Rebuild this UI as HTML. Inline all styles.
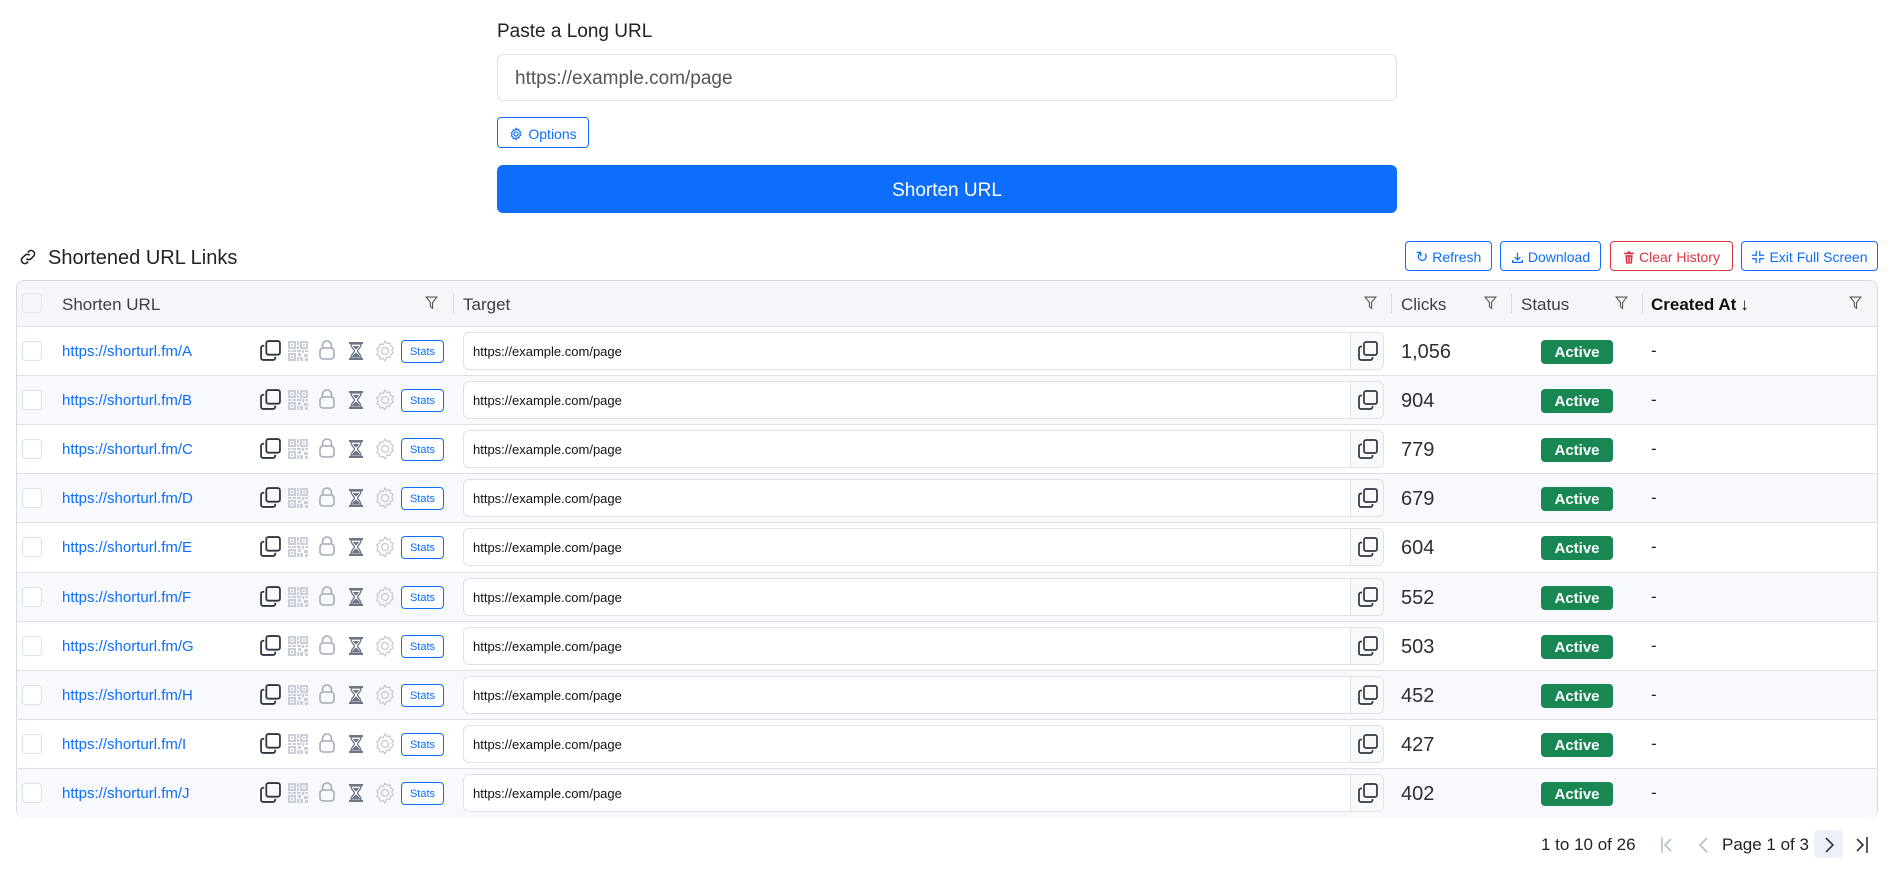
<!DOCTYPE html>
<html><head><meta charset="utf-8">
<style>
*{box-sizing:border-box;margin:0;padding:0}
body{width:1894px;height:875px;background:#fff;font-family:"Liberation Sans",sans-serif;color:#212529;position:relative;overflow:hidden}
.a{position:absolute}
.btn{position:absolute;top:241px;height:30px;border:1px solid #0d6efd;border-radius:4px;color:#0d6efd;font-size:14px;display:flex;align-items:center;justify-content:center;gap:4px;background:#fff;padding-top:2px}
.hdr{position:absolute;top:282px;height:46px;font-size:17px;color:#3a3f47;display:flex;align-items:center}
.sep{position:absolute;top:293px;width:1px;height:20px;background:#d5d9e0}
.flt{position:absolute;top:296px}
.row{position:absolute;left:17px;width:1860px;height:49px;border-top:1px solid #dde2ea}
.row.alt{background:#f8f9fd}
.cb{position:absolute;left:5px;top:14px;width:20px;height:20px;border:1px solid #dee2e6;border-radius:4px;background:#fff}
.lnk{position:absolute;left:45px;top:16px;font-size:15px;color:#0d6efd}
.ic{position:absolute;top:13px}
.stats{position:absolute;left:384px;top:13px;width:43px;height:23px;border:1px solid #0d6efd;border-radius:4px;font-size:11px;color:#0d6efd;display:flex;align-items:center;justify-content:center;background:#fff}
.tin{position:absolute;left:446px;top:5px;width:921px;height:38px;border:1px solid #dee2e6;border-radius:6px;background:#fff;font-size:13px;color:#111;padding-left:9px;line-height:37px}
.tcp{position:absolute;right:0;top:0;width:33px;height:36px;border-left:1px solid #dee2e6;background:#f8f9fa;border-radius:0 6px 6px 0}
.clk{position:absolute;left:1384px;top:14px;font-size:20px;color:#2b2f36}
.act{position:absolute;left:1524px;top:13px;width:72px;height:24px;background:#198754;border-radius:4px;color:#fff;font-weight:bold;font-size:15px;display:flex;align-items:center;justify-content:center;padding-top:1px}
.dash{position:absolute;left:1634px;top:14px;font-size:17px}
</style></head><body>
<div class="a" style="left:497px;top:21px;font-size:19px;color:#222">Paste a Long URL</div>
<div class="a" style="left:497px;top:54px;width:900px;height:47px;border:1px solid #dee2e6;border-radius:6px;font-size:19px;color:#555;padding-left:17px;line-height:48px">https://example.com/page</div>
<div class="a" style="left:497px;top:117px;width:92px;height:31px;border:1px solid #0d6efd;border-radius:4px;color:#0d6efd;font-size:14px;display:flex;align-items:center;justify-content:center;gap:5px;padding-top:2px">
<svg width="14" height="14" viewBox="0 0 16 16" fill="none" stroke="#0d6efd" stroke-width="1.3"><circle cx="8" cy="8" r="2.3"/><path d="M8 1.5l1.2 1.6 2-.4.4 2 1.7 1.1-.9 1.8.9 1.8-1.7 1.1-.4 2-2-.4L8 14.5l-1.2-1.6-2 .4-.4-2-1.7-1.1.9-1.8-.9-1.8 1.7-1.1.4-2 2 .4z"/></svg>Options</div>
<div class="a" style="left:497px;top:165px;width:900px;height:48px;background:#0d6efd;border-radius:6px;color:#fff;font-size:19px;display:flex;align-items:center;justify-content:center;padding-top:3px">Shorten URL</div>

<svg class="a" style="left:19px;top:248px" width="18" height="18" viewBox="0 0 16 16" fill="none" stroke="#222" stroke-width="1.4"><path d="M6.5 9.5a3 3 0 0 0 4.2 0l2.5-2.5a3 3 0 0 0-4.2-4.2L7.8 3.9"/><path d="M9.5 6.5a3 3 0 0 0-4.2 0L2.8 9a3 3 0 0 0 4.2 4.2l1.1-1.1"/></svg>
<div class="a" style="left:48px;top:247px;font-size:20px;color:#222">Shortened URL Links</div>

<div class="btn" style="left:1405px;width:87px"><span style="font-size:15px">↻</span>Refresh</div>
<div class="btn" style="left:1500px;width:101px"><svg width="13" height="13" viewBox="0 0 16 16" fill="none" stroke="#0d6efd" stroke-width="1.5"><path d="M8 2v9M4.5 7.5 8 11l3.5-3.5M2 11v3h12v-3"/></svg>Download</div>
<div class="btn" style="left:1610px;width:123px;border-color:#dc3545;color:#dc3545"><svg width="12" height="13" viewBox="0 0 14 16" fill="#dc3545"><rect x="1" y="2" width="12" height="2"/><rect x="5" y="0.5" width="4" height="2"/><path d="M2.5 5h9l-.8 10.5h-7.4zM5 7v7h1V7zm3 0v7h1V7z"/></svg>Clear History</div>
<div class="btn" style="left:1741px;width:137px"><svg width="14" height="14" viewBox="0 0 16 16" fill="none" stroke="#0d6efd" stroke-width="1.4"><path d="M6 1v5H1M10 1v5h5M6 15v-5H1M10 15v-5h5"/></svg>Exit Full Screen</div>

<div class="a" style="left:16px;top:280px;width:1862px;height:538px;border:1px solid #d5dbe4;border-radius:8px;background:#fff;overflow:hidden">
<div class="a" style="left:0;top:0;width:1862px;height:46px;background:#f5f6f9"></div>
</div>
<div class="a" style="left:22px;top:293px;width:20px;height:20px;border:1px solid #e3e6ea;border-radius:4px;background:#f5f6f9"></div>
<div class="hdr" style="left:62px">Shorten URL</div>
<div class="hdr" style="left:463px">Target</div>
<div class="hdr" style="left:1401px">Clicks</div>
<div class="hdr" style="left:1521px">Status</div>
<div class="hdr" style="left:1651px;color:#111;font-weight:bold">Created At <span style="font-weight:normal;margin-left:4px">↓</span></div>
<div class="sep" style="left:453px"></div><div class="sep" style="left:1391px"></div><div class="sep" style="left:1511px"></div><div class="sep" style="left:1642px"></div>
<svg class="flt" style="left:425px" width="13" height="14" viewBox="0 0 12 13" fill="none" stroke="#555" stroke-width="1"><path d="M1 1h10L7 6v5.5L5 10V6z"/></svg>
<svg class="flt" style="left:1364px" width="13" height="14" viewBox="0 0 12 13" fill="none" stroke="#555" stroke-width="1"><path d="M1 1h10L7 6v5.5L5 10V6z"/></svg>
<svg class="flt" style="left:1484px" width="13" height="14" viewBox="0 0 12 13" fill="none" stroke="#555" stroke-width="1"><path d="M1 1h10L7 6v5.5L5 10V6z"/></svg>
<svg class="flt" style="left:1615px" width="13" height="14" viewBox="0 0 12 13" fill="none" stroke="#555" stroke-width="1"><path d="M1 1h10L7 6v5.5L5 10V6z"/></svg>
<svg class="flt" style="left:1849px" width="13" height="14" viewBox="0 0 12 13" fill="none" stroke="#555" stroke-width="1"><path d="M1 1h10L7 6v5.5L5 10V6z"/></svg>

<svg width="0" height="0" style="position:absolute"><defs>
<g id="cp" fill="none" stroke="#2f3640" stroke-width="1.7"><rect x="6" y="1" width="13" height="13" rx="2"/><path d="M4 5.5H3a2 2 0 0 0-2 2V17a2 2 0 0 0 2 2h9.5a2 2 0 0 0 2-2v-1"/></g>
<g id="qr" fill="#c9ced8"><path d="M0 0h8v8H0zM2 2v4h4V2zM12 0h8v8h-8zm2 2v4h4V2zM0 12h8v8H0zm2 2v4h4v-4zM3 3h2v2H3zM15 3h2v2h-2zM3 15h2v2H3zM9 0h2v4H9zM9 5h2v3H9zM9 9h4v2H9zM14 9h2v3h-2zM17 9h3v2h-3zM0 9h3v2H0zM4 9h4v2H4zM10 12h3v3h-3zM12 16h3v4h-3zM16 13h4v3h-4zM17 17h3v3h-3zM9 16h2v4H9z"/></g>
<g id="lk" fill="none" stroke="#a4acb8" stroke-width="1.6"><rect x="2" y="8.5" width="14" height="11" rx="3"/><path d="M4.5 8.5V6a4.5 4.5 0 0 1 9 0v2.5"/></g>
<g id="hg"><path d="M1 1h14v2H1zM1 17h14v2H1z" fill="#6c7684"/><path d="M3 3h10c0 4-3.5 5.5-3.5 7S13 13 13 17H3c0-4 3.5-5.5 3.5-7S3 7 3 3z" fill="none" stroke="#6c7684" stroke-width="1.3"/><path d="M4 16c1-2.5 3-3.5 4-4.5 1 1 3 2 4 4.5zM5 5h6c-1 2-2 2.5-3 3.5C7 7.5 6 7 5 5z" fill="#6c7684"/></g>
<g id="gr" fill="none" stroke="#c3c9d2" stroke-width="1.1"><circle cx="10" cy="10" r="3.2"/><path d="M10 1l1.7 2.2 2.7-.6.6 2.7 2.4 1.5-1.2 2.5 1.2 2.5-2.4 1.5-.6 2.7-2.7-.6L10 19l-1.7-2.2-2.7.6-.6-2.7-2.4-1.5 1.2-2.5L2.6 7.8 5 6.3l.6-2.7 2.7.6z"/></g>
</defs></svg>

<div id="rows"></div>
<div class="a" style="left:1541px;top:835px;font-size:17px;color:#222">1 to 10 of 26</div>
<svg class="a" style="left:1660px;top:836px" width="14" height="18" viewBox="0 0 14 18" fill="none" stroke="#b7bec9" stroke-width="1.6"><path d="M2 1v16M11 3 5 9l6 6"/></svg>
<svg class="a" style="left:1697px;top:836px" width="14" height="18" viewBox="0 0 14 18" fill="none" stroke="#b7bec9" stroke-width="1.6"><path d="M10 2 3 9l7 7"/></svg>
<div class="a" style="left:1722px;top:835px;font-size:17px;color:#222">Page 1 of 3</div>
<div class="a" style="left:1814px;top:830px;width:29px;height:28px;background:#edf0f7;border-radius:4px"></div>
<svg class="a" style="left:1822px;top:836px" width="14" height="18" viewBox="0 0 14 18" fill="none" stroke="#2f3640" stroke-width="1.6"><path d="M4 2l7 7-7 7"/></svg>
<svg class="a" style="left:1855px;top:836px" width="14" height="18" viewBox="0 0 14 18" fill="none" stroke="#2f3640" stroke-width="1.6"><path d="M2 3l6 6-6 6M12 1v16"/></svg>

<script>
var L="ABCDEFGHIJ",C=["1,056","904","779","679","604","552","503","452","427","402"],h="";
for(var i=0;i<10;i++){var t=Math.round(326+i*49.1);
h+='<div class="row'+(i%2?' alt':'')+'" style="top:'+t+'px;'+(i==9?'height:50px;border-radius:0 0 7px 7px':'')+'"><div class="cb"></div><div class="lnk">https://shorturl.fm/'+L[i]+'</div>'+
'<svg class="ic" style="left:243px" width="21" height="21" viewBox="0 0 20 20"><use href="#cp"/></svg>'+
'<svg class="ic" style="left:271px;top:14px" width="20" height="20" viewBox="0 0 20 20"><use href="#qr"/></svg>'+
'<svg class="ic" style="left:301px;top:12px" width="18" height="22" viewBox="0 0 18 21"><use href="#lk"/></svg>'+
'<svg class="ic" style="left:331px;top:14px" width="16" height="20" viewBox="0 0 16 20"><use href="#hg"/></svg>'+
'<svg class="ic" style="left:357px" width="22" height="22" viewBox="0 0 20 20"><use href="#gr"/></svg>'+
'<div class="stats">Stats</div><div class="tin">https://example.com/page<div class="tcp"><svg style="position:absolute;left:7px;top:8px" width="20" height="20" viewBox="0 0 20 20"><use href="#cp"/></svg></div></div>'+
'<div class="clk">'+C[i]+'</div><div class="act">Active</div><div class="dash">-</div></div>';}
document.getElementById("rows").innerHTML=h;
</script>
</body></html>
